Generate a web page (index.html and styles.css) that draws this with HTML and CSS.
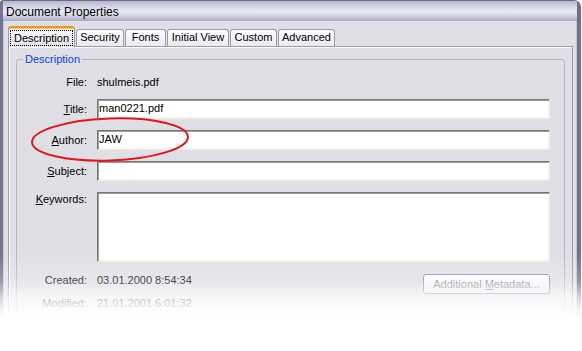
FILE: index.html
```html
<!DOCTYPE html>
<html lang="en">
<head>
    <meta charset="UTF-8">
    <meta name="viewport" content="width=device-width, initial-scale=1.0">
    <title>Document Properties</title>
    <link rel="stylesheet" href="styles.css">
</head>
<body>
    <div class="shot">
        <div class="window">
            <div class="titlebar">Document Properties</div>
            <div class="client">
                <ul class="tabs">
                    <li class="tab active"><span class="focus">Description</span></li>
                    <li class="tab tab-security">Security</li>
                    <li class="tab tab-fonts">Fonts</li>
                    <li class="tab tab-view">Initial View</li>
                    <li class="tab tab-custom">Custom</li>
                    <li class="tab tab-advanced">Advanced</li>
                </ul>
                <div class="panel">
                    <fieldset class="group">
                        <legend>Description</legend>
                        <div class="fields">
                            <span class="label line">File:</span>
                            <span class="value line">shulmeis.pdf</span>

                            <span class="label"><u>T</u>itle:</span>
                            <div class="input">man0221.pdf</div>

                            <span class="label"><u>A</u>uthor:</span>
                            <div class="input">JAW</div>

                            <span class="label"><u>S</u>ubject:</span>
                            <div class="input"></div>

                            <span class="label top"><u>K</u>eywords:</span>
                            <div class="input tall"></div>
                        </div>
                        <div class="dates">
                            <span class="label">Created:</span>
                            <span class="value">03.01.2000 8:54:34</span>
                            <span class="label">Modified:</span>
                            <span class="value">21.01.2001 6:01:32</span>
                            <button class="btn" disabled>Additional <u>M</u>etadata...</button>
                        </div>
                    </fieldset>
                </div>
            </div>
        </div>

        <svg class="callout" width="582" height="351" viewBox="0 0 582 351">
            <ellipse cx="110" cy="139.5" rx="78" ry="21" transform="rotate(-2 110 139.5)"
                     fill="none" stroke="#e3151b" stroke-width="2"/>
        </svg>
        <div class="fade"></div>
    </div>
</body>
</html>
```
FILE: styles.css
```css
* {
    margin: 0;
    padding: 0;
    box-sizing: border-box;
}

body {
    background: #fff;
    font-family: "Liberation Sans", Arial, sans-serif;
    font-size: 11px;
    color: #000;
    overflow: hidden;
}

.shot {
    position: relative;
    width: 582px;
    height: 351px;
    overflow: hidden;
}

/* window frame */
.window {
    width: 581px;
    height: 351px;
    background: #e0dfe5;
    border-top: 1px solid #6c6c8a;
    border-left: 3px solid #74748f;
    border-right: 4px solid #6f6f8c;
    border-radius: 3px 7px 0 0;
    box-shadow: inset 1px 0 #c4c4d6, inset -1px 0 #c4c4d6;
}

.titlebar {
    height: 20px;
    padding: 4px 0 0 3px;
    font-size: 12px;
    line-height: 14px;
    background: linear-gradient(to bottom, #b4b4cc 0, #d2d2e4 25%, #e8e8f2 50%, #e0e0ec 65%, #bebed6 88%, #a6a6c2 100%);
}

.client {
    padding: 5px 4px 0 5px;
}

/* tabs */
.tabs {
    display: flex;
    align-items: flex-end;
    gap: 1px;
    height: 20px;
    list-style: none;
    position: relative;
    z-index: 1;
}

.tab {
    height: 17px;
    line-height: 15px;
    text-align: center;
    border: 1px solid #9a9ca6;
    border-bottom: none;
    border-radius: 3px 3px 0 0;
    background: linear-gradient(to bottom, #fdfdfe, #ebeaef);
}

.tab.active {
    width: 67px;
    height: 21px;
    margin-bottom: -1px;
    padding: 2px 1px 0;
    border-top: 2px solid #e8942f;
    box-shadow: inset 0 1px #ffc94a;
    background: linear-gradient(to bottom, #fcfcfd, #e0dfe5);
}

.focus {
    display: block;
    line-height: 14px;
    border: 1px dotted #000;
}

.tab-security { width: 48px; }
.tab-fonts { width: 41px; }
.tab-view { width: 62px; }
.tab-custom { width: 47px; }
.tab-advanced { width: 57px; }

.panel {
    height: 320px;
    padding: 6px 7px 0;
    border: 1px solid #9a9ca6;
    box-shadow: inset 1px 1px #fbfbfd;
}

/* group box */
.group {
    height: 300px;
    min-width: 0;
    padding: 10px 14px 0 0;
    border: 1px solid #b6b6bf;
    border-radius: 3px;
}

.group legend {
    margin-left: 6px;
    padding: 0 2px;
    line-height: 13px;
    color: #0046d5;
}

.fields {
    display: grid;
    grid-template-columns: 70px 1fr;
    column-gap: 10px;
    row-gap: 11px;
    align-items: center;
}

.label {
    text-align: right;
}

.label.top {
    align-self: start;
    padding-top: 1px;
}

.line {
    line-height: 12px;
}

.input {
    height: 20px;
    padding: 0 1px;
    line-height: 16px;
    background: #fff;
    border: 1px solid;
    border-color: #767676 #eeede4 #eeede4 #767676;
    box-shadow: inset 1px 1px #9d9d9d, inset -1px -1px #f6f5ee;
}

.input.tall {
    height: 70px;
}

.dates {
    display: grid;
    grid-template-columns: 70px 1fr auto;
    column-gap: 10px;
    row-gap: 9px;
    margin-top: 11px;
    line-height: 14px;
}

.btn {
    grid-column: 3;
    grid-row: 1 / 3;
    align-self: start;
    width: 127px;
    height: 20px;
    margin-top: 1px;
    font: inherit;
    color: #8e8e94;
    border: 1px solid #7f98b8;
    border-radius: 3px;
    background: linear-gradient(to bottom, #fdfdfe, #ebebef);
}

/* annotation and reflection fade */
.callout {
    position: absolute;
    left: 0;
    top: 0;
    z-index: 2;
}

.fade {
    position: absolute;
    left: 0;
    right: 0;
    top: 252px;
    bottom: 0;
    z-index: 3;
    background: linear-gradient(to bottom,
        rgba(255, 255, 255, 0) 0,
        rgba(255, 255, 255, 0.25) 28px,
        rgba(255, 255, 255, 0.72) 46px,
        rgba(255, 255, 255, 0.9) 56px,
        #fff 68px);
}
```
